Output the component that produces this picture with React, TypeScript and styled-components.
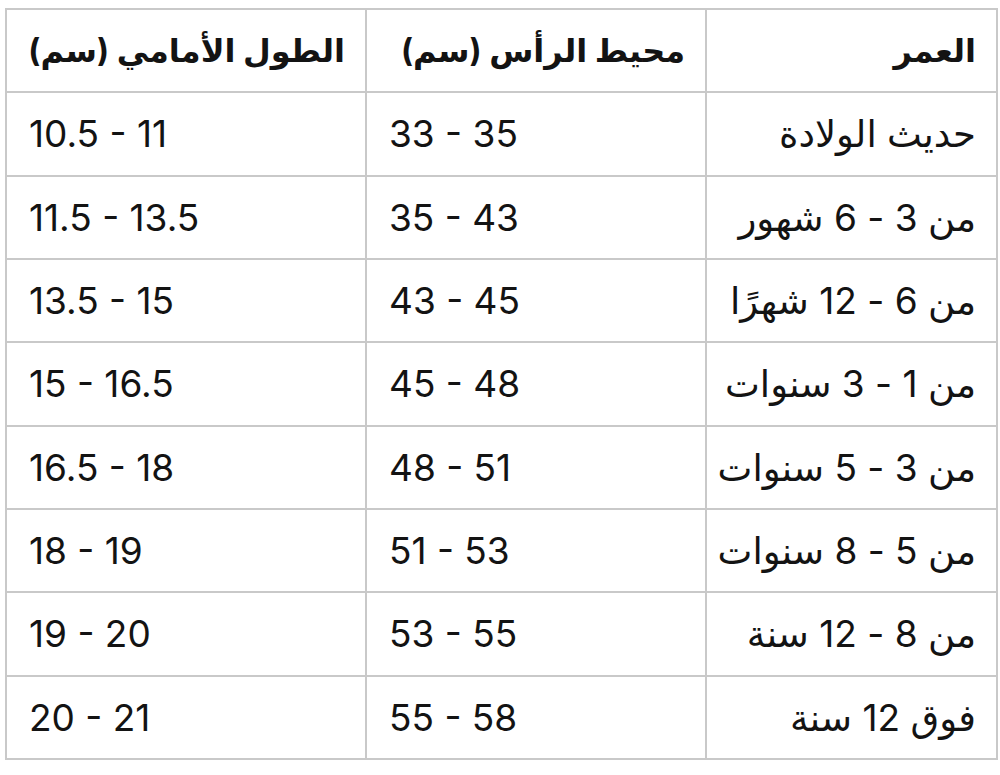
import styled, { createGlobalStyle } from "styled-components";

type Row = { age: string; head: string; front: string };

const rows: Row[] = [
  { age: "حديث الولادة", head: "33 - 35", front: "10.5 - 11" },
  { age: "من 3 - 6 شهور", head: "35 - 43", front: "11.5 - 13.5" },
  { age: "من 6 - 12 شهرًا", head: "43 - 45", front: "13.5 - 15" },
  { age: "من 1 - 3 سنوات", head: "45 - 48", front: "15 - 16.5" },
  { age: "من 3 - 5 سنوات", head: "48 - 51", front: "16.5 - 18" },
  { age: "من 5 - 8 سنوات", head: "51 - 53", front: "18 - 19" },
  { age: "من 8 - 12 سنة", head: "53 - 55", front: "19 - 20" },
  { age: "فوق 12 سنة", head: "55 - 58", front: "20 - 21" },
];

const GlobalStyle = createGlobalStyle`
  html, body {
    margin: 0;
    background: #ffffff;
  }
  body {
    font-family: "Inter", "DejaVu Sans", sans-serif;
    color: #131313;
  }
`;

const Page = styled.div`
  padding: 8px 2px 0 5px;
`;

const Grid = styled.div`
  direction: rtl;
  display: grid;
  grid-template-columns: 289px 338px 358px;
  grid-template-rows: repeat(9, 1fr);
  gap: 2px;
  padding: 2px;
  height: 752px;
  width: 993px;
  box-sizing: border-box;
  background: #c9c9c9;
`;

const Cell = styled.div<{ $numeric?: boolean; $head?: boolean }>`
  background: #ffffff;
  display: flex;
  align-items: center;
  padding: 0 20px 0 22px;
  font-size: ${({ $head }) => ($head ? "32px" : "37px")};
  font-weight: ${({ $head }) => ($head ? 700 : 400)};
  direction: ${({ $numeric }) => ($numeric ? "ltr" : "rtl")};
  justify-content: flex-start;
  white-space: nowrap;
`;

export default function App() {
  return (
    <>
      <GlobalStyle />
      <Page>
        <Grid>
          <Cell $head>العمر</Cell>
          <Cell $head>محيط الرأس (سم)</Cell>
          <Cell $head>الطول الأمامي (سم)</Cell>
          {rows.map((r) => (
            <>
              <Cell key={r.age + "a"}>{r.age}</Cell>
              <Cell key={r.age + "h"} $numeric>
                {r.head}
              </Cell>
              <Cell key={r.age + "f"} $numeric>
                {r.front}
              </Cell>
            </>
          ))}
        </Grid>
      </Page>
    </>
  );
}
